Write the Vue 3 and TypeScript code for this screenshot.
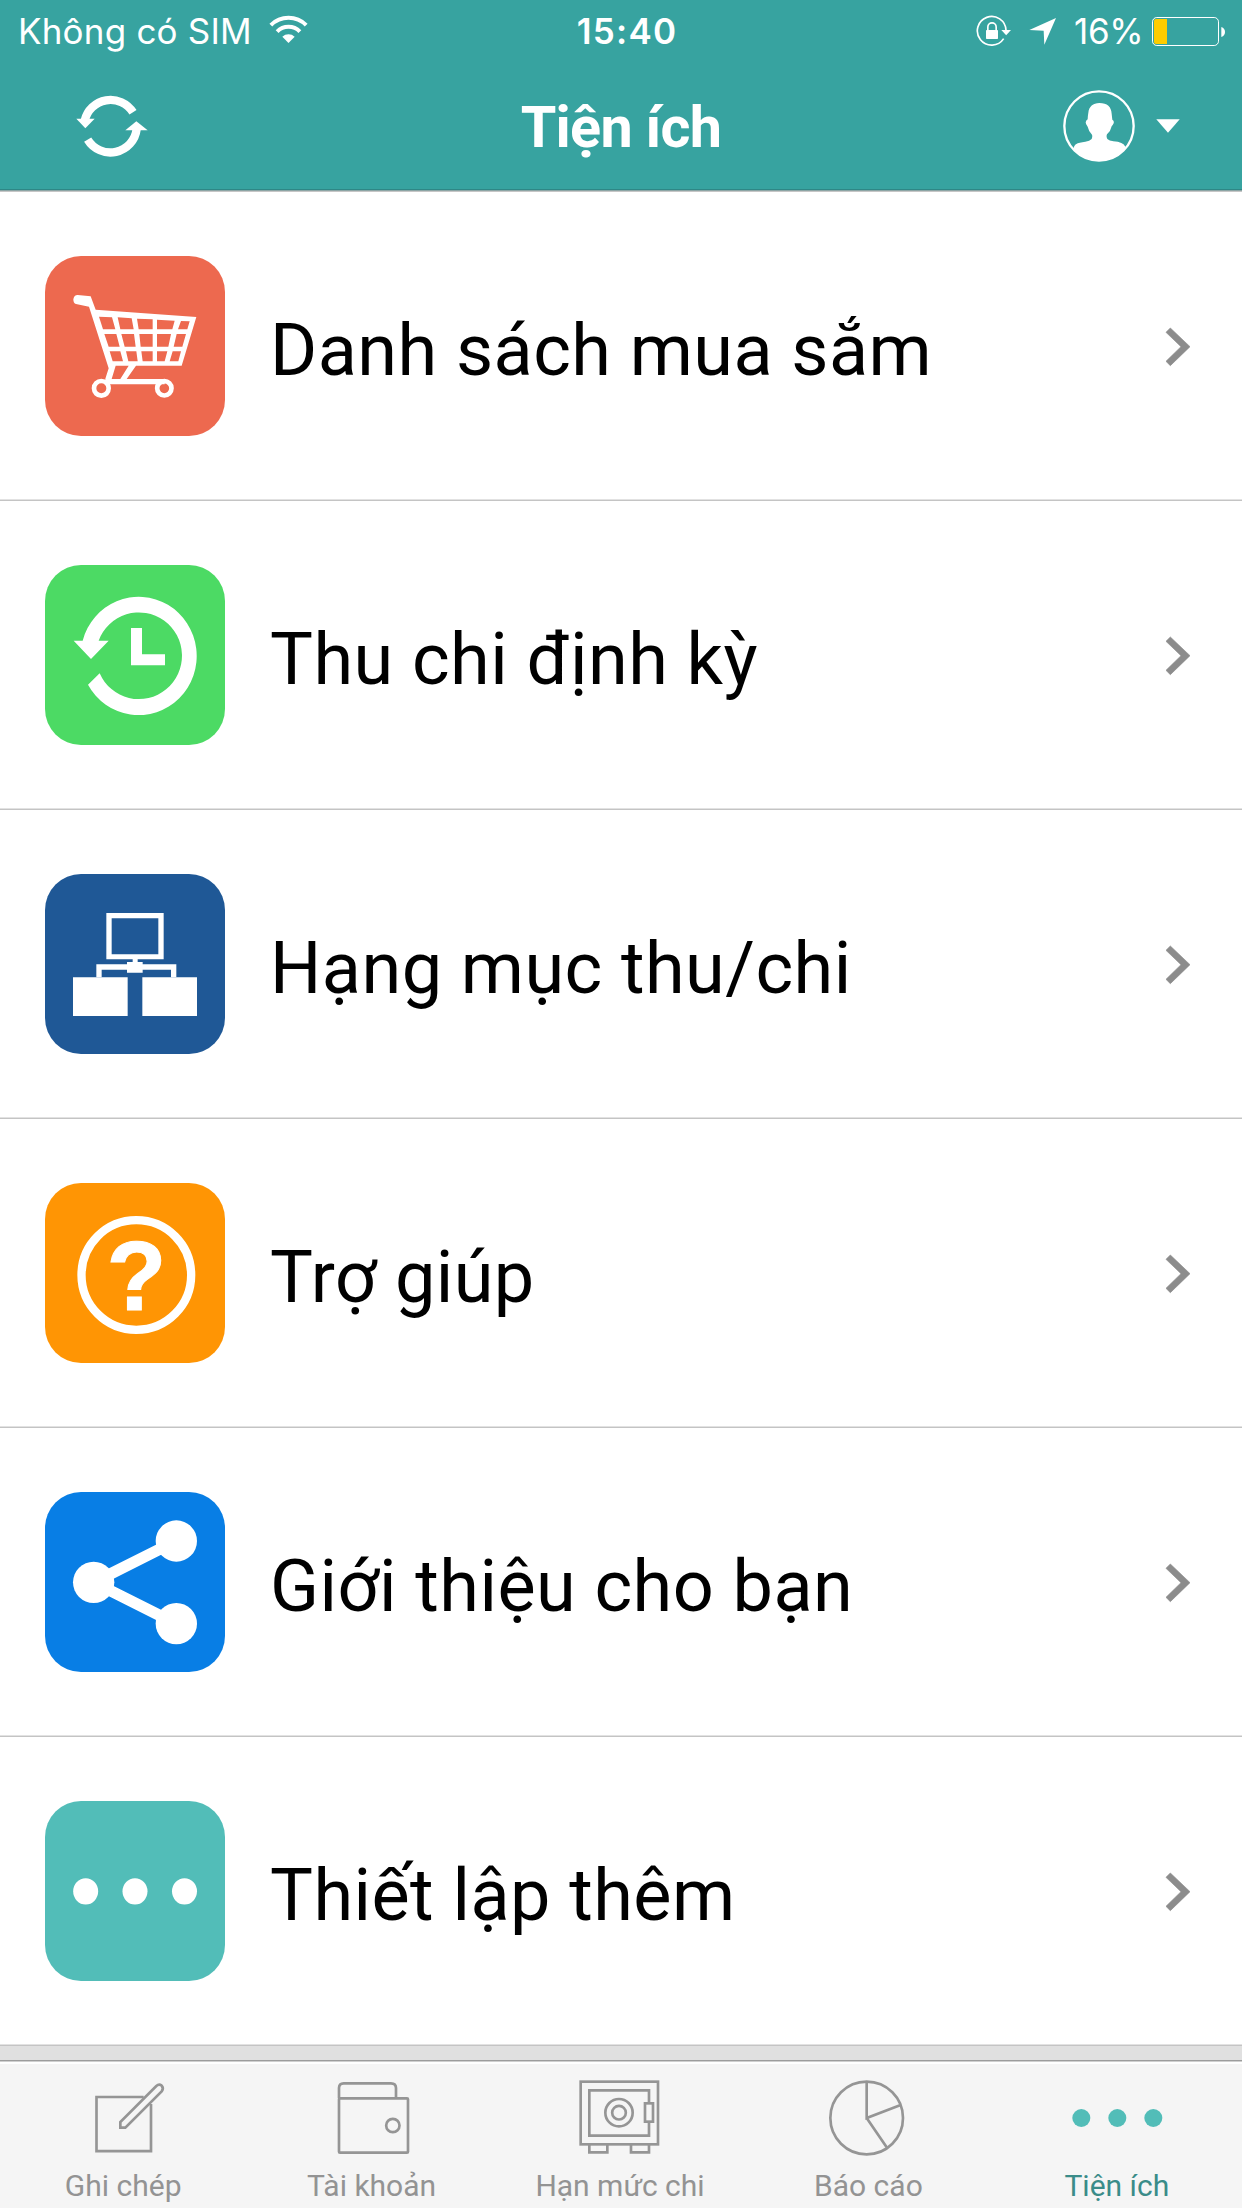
<script setup lang="ts">
type IconName = 'cart' | 'history' | 'category' | 'help' | 'share' | 'more'
type TabIcon = 'note' | 'wallet' | 'safe' | 'chart' | 'dots'

interface MenuItem {
  icon: IconName
  label: string
  box: string
}

interface Tab {
  icon: TabIcon
  label: string
  box: string
  active?: boolean
}

const items: MenuItem[] = [
  { icon: 'cart', label: 'Danh sách mua sắm', box: '45 48 540 540' },
  { icon: 'history', label: 'Thu chi định kỳ', box: '45 45 540 540' },
  { icon: 'category', label: 'Hạng mục thu/chi', box: '45 42 540 540' },
  { icon: 'help', label: 'Trợ giúp', box: '45 39 540 540' },
  { icon: 'share', label: 'Giới thiệu cho bạn', box: '45 36 540 540' },
  { icon: 'more', label: 'Thiết lập thêm', box: '45 63 540 540' },
]

const tabs: Tab[] = [
  { icon: 'note', label: 'Ghi chép', box: '223 117 300 300' },
  { icon: 'wallet', label: 'Tài khoản', box: '968 117 300 300' },
  { icon: 'safe', label: 'Hạn mức chi', box: '393 117 300 300' },
  { icon: 'chart', label: 'Báo cáo', box: '1138 117 300 300' },
  { icon: 'dots', label: 'Tiện ích', box: '383 687 300 300', active: true },
]
</script>

<template>
  <div class="screen">
    <header class="header">
      <div class="status">
        <div class="status-left">
          <span class="carrier">Không có SIM</span>
          <svg class="wifi" viewBox="807 45 117 87">
            <g fill="none" stroke="#fff" stroke-width="12">
              <path d="M812.5 75.500A75 75 0 0 1 918.500 75.500" />
              <path d="M831.400 94.800A48 48 0 0 1 899.600 94.800" />
            </g>
            <path d="M865.500 129L847 110A27 27 0 0 1 884 110Z" fill="#fff" />
          </svg>
        </div>
        <span class="time">15:40</span>
        <div class="status-right">
          <svg class="lock" viewBox="108 42 108 96">
            <path d="M191 113A43 43 0 1 1 198 88" fill="none" stroke="#fff" stroke-width="5" />
            <path d="M184 87H213L198.500 103Z" fill="#fff" />
            <rect x="138" y="87" width="36" height="27" rx="2" fill="#fff" />
            <path d="M143.500 88V78A12.500 12.500 0 0 1 168.500 78V88" fill="none" stroke="#fff" stroke-width="5" />
          </svg>
          <svg class="location" viewBox="267 51 84 84">
            <path d="M268 90L348 54L313 134L311 92Z" fill="#fff" />
          </svg>
          <span class="percent">16%</span>
          <svg class="battery" viewBox="636 45 222 93">
            <rect x="637.500" y="49.500" width="198" height="84" rx="13" fill="none" stroke="#fff" stroke-width="3" />
            <path d="M681 54V129H648Q642 129 642 123V60Q642 54 648 54Z" fill="#ffcc00" />
            <path d="M844 78Q855 82 855 93Q855 104 844 108Z" fill="#fff" />
          </svg>
        </div>
      </div>
      <div class="nav">
        <svg class="refresh" viewBox="228 282 216 189">
          <g fill="none" stroke="#fff" stroke-width="25">
            <path d="M399 334A79.500 79.500 0 0 0 254 359" />
            <path d="M263 416A79.500 79.500 0 0 0 410 384" />
          </g>
          <path d="M229 353H284L256 382Z" fill="#fff" />
          <path d="M376 388H443L409 361Z" fill="#fff" />
        </svg>
        <h1 class="title">Tiện ích</h1>
        <div class="account">
          <svg class="avatar" viewBox="369 270 216 216">
            <circle cx="477" cy="378" r="104" fill="none" stroke="#fff" stroke-width="7" />
            <path
              d="M478 309C502 309 514 321 515 341Q516 351 517 359Q523 362 521 370Q518 376 515 379Q512 394 501 403Q498 410 502 417Q508 423 520 424Q550 426 556 440L557 446A104 104 0 0 1 400 446L403 438Q407 428 436 425Q449 424 455 417Q458 410 456 404Q446 394 443 380Q437 374 437 367Q438 361 443 358Q443 350 445 338C447 320 459 309 478 309Z"
              fill="#fff"
            />
          </svg>
          <svg class="caret" viewBox="648 359 72 43"><path d="M648 360H720L684 401Z" fill="#fff" /></svg>
        </div>
      </div>
    </header>

    <main class="list">
      <div v-for="item in items" :key="item.icon" class="row">
        <svg class="tile" :class="item.icon" :viewBox="item.box">
          <g v-if="item.icon === 'cart'">
            <path
              fill-rule="evenodd"
              d="M143 165L182 169L197 209L499 231L455 377L318 377L290 417H404V433H226V416L236 385L177 200L138 192Q130 190 130 178Q132 165 143 165Z
              M257 377L245 417H271L296 377Z
              M207 230L246 232L256 268H219Z M263 232L305 235L311 268H271Z M321 236L368 238V268H326Z M381 239L434 242L427 268H381Z M453 243L479 244L472 268H444Z
              M223 282H259L269 320H236Z M274 282H312L317 320H284Z M328 282H368V320H332Z M381 282H423L415 320H381Z M440 282H468L457 320H431Z
              M239 334H271L279 364H248Z M288 334H319L323 364H295Z M334 334H368V364H338Z M381 334H412L404 364H381Z M428 334H453L445 364H419Z"
            />
            <circle class="wheel" cx="214" cy="445" r="22" />
            <circle class="wheel" cx="403" cy="445" r="21.500" />
          </g>
          <g v-else-if="item.icon === 'history'">
            <path d="M158 272A174 177.500 0 1 1 174 404L209 370A129 130 0 1 0 206 272H236L183 327L131 272Z" />
            <path d="M303 234H336V313H405V346H303Z" />
          </g>
          <g v-else-if="item.icon === 'category'">
            <path fill-rule="evenodd" d="M229 159H401V298H229ZM245 175V283H385V175Z" />
            <path d="M308 297H323V306H338V313H439V352H423V329H338V338H291V329H215V352H199V313H291V306H308Z" />
            <path d="M129 352H293V468H129ZM337 352H501V468H337Z" />
          </g>
          <g v-else-if="item.icon === 'help'">
            <circle cx="319" cy="315" r="164.500" class="ring" />
            <text x="319" y="420" class="question">?</text>
          </g>
          <g v-else-if="item.icon === 'share'">
            <path d="M438 183L191 307L438 431" class="link" />
            <circle cx="191" cy="307" r="62" />
            <circle cx="439" cy="183" r="62" />
            <circle cx="439" cy="431" r="62" />
          </g>
          <g v-else>
            <ellipse cx="167" cy="334" rx="37.500" ry="39.500" />
            <ellipse cx="315" cy="334" rx="37.500" ry="39.500" />
            <ellipse cx="463.500" cy="334" rx="37.500" ry="39.500" />
          </g>
        </svg>
        <span class="label">{{ item.label }}</span>
        <svg class="chevron" viewBox="677 100 72 114">
          <path d="M690 100L749 156L690 213L677 200L722 156L677 113Z" fill="#8c8c8c" stroke="#8c8c8c" stroke-width="2" />
        </svg>
      </div>
    </main>

    <div class="spacer"></div>

    <nav class="tabs">
      <div v-for="tab in tabs" :key="tab.icon" class="tab" :class="{ active: tab.active }">
        <svg class="tab-icon" :viewBox="tab.box">
          <g v-if="tab.icon === 'note'">
            <path d="M432 201H290.500V363.500H454V222" />
            <path d="M362 293V276L470 168Q478 161 486 167Q493 175 486 184L377 293Z" />
          </g>
          <g v-else-if="tab.icon === 'wallet'">
            <path d="M1016 205V174Q1016 160 1030 160H1172Q1187 160 1187 174V205" />
            <rect x="1016" y="205" width="207" height="163" rx="3" />
            <circle cx="1177.500" cy="286.500" r="20" />
          </g>
          <g v-else-if="tab.icon === 'safe'">
            <rect x="422" y="155" width="232" height="188" />
            <path d="M627 219V181H448V317H627V276" />
            <rect x="615" y="220" width="24" height="55" />
            <circle cx="537" cy="248" r="41" />
            <circle cx="537" cy="248" r="20.500" />
            <path d="M448 343V367H502V343M573 343V367H627V343" />
          </g>
          <g v-else-if="tab.icon === 'chart'">
            <circle cx="1281" cy="264" r="109" />
            <path d="M1281 155V264L1381 226M1281 264L1341 352" />
          </g>
          <g v-else class="dots">
            <circle cx="423" cy="834" r="27" />
            <circle cx="531" cy="834" r="27" />
            <circle cx="639" cy="834" r="27" />
          </g>
        </svg>
        <span class="tab-label">{{ tab.label }}</span>
      </div>
    </nav>
  </div>
</template>

<style>
body {
  margin: 0;
}
</style>

<style scoped>
.screen {
  display: flex;
  flex-direction: column;
  width: 1242px;
  height: 2208px;
  overflow: hidden;
  background: #fff;
  font-family: Roboto, 'Noto Sans', sans-serif;
}
svg {
  display: block;
  flex: none;
}
.header {
  box-sizing: border-box;
  height: 192px;
  color: #fff;
  background: linear-gradient(#37a3a0 189px, #2e8786 189px 190px, #8ba5a5 190px 191px, #c6c6c6 191px);
}
.status {
  display: grid;
  grid-template-columns: 1fr auto 1fr;
  align-items: center;
  height: 62px;
  font-family: Inter, 'Liberation Sans', sans-serif;
  font-size: 35px;
  line-height: 62px;
}
.status-left,
.status-right {
  display: flex;
  align-items: center;
}
.status-left {
  padding-left: 18px;
}
.carrier {
  width: 251px;
  letter-spacing: 0.2px;
  white-space: nowrap;
}
.wifi {
  width: 39px;
  height: 29px;
  margin-bottom: 3px;
}
.time {
  margin-left: 12px;
  font-weight: 600;
  letter-spacing: 1.2px;
}
.status-right {
  justify-content: flex-end;
  padding-right: 16px;
}
.lock {
  width: 36px;
  height: 32px;
}
.location {
  width: 28px;
  height: 28px;
  margin-left: 17px;
}
.percent {
  width: 78px;
  margin-left: 17px;
  letter-spacing: -0.3px;
  white-space: nowrap;
}
.battery {
  width: 74px;
  height: 31px;
}
.nav {
  display: grid;
  grid-template-columns: 1fr auto 1fr;
  align-items: center;
  height: 128px;
}
.refresh {
  width: 72px;
  height: 63px;
  margin-left: 76px;
}
.title {
  margin: 4px 0 0;
  font-size: 57.500px;
  font-weight: 700;
  letter-spacing: -0.7px;
  line-height: 68px;
}
.account {
  display: flex;
  align-items: center;
  justify-content: flex-end;
  padding-right: 62px;
}
.avatar {
  width: 72px;
  height: 72px;
}
.caret {
  width: 24px;
  height: 14px;
  margin-left: 21px;
}
.row {
  box-sizing: border-box;
  display: flex;
  align-items: center;
  height: 309px;
  padding: 0 52px 1px 45px;
  background: linear-gradient(#fff 307px, #e2e2e2 307px 308px, #c4c4c4 308px);
}
.tile {
  width: 180px;
  height: 180px;
  border-radius: 36px;
  fill: #fff;
}
.tile.cart { background: #ed694f; }
.tile.history { background: #4cda64; }
.tile.category { background: #1f5896; }
.tile.help { background: #ff9504; }
.tile.share { background: #087ee5; }
.tile.more { background: #52bdb8; }
.wheel {
  fill: none;
  stroke: #fff;
  stroke-width: 14;
}
.ring {
  fill: none;
  stroke: #fff;
  stroke-width: 25;
}
.link {
  fill: none;
  stroke: #fff;
  stroke-width: 34;
}
.question {
  font-family: 'Liberation Sans', sans-serif;
  font-size: 294px;
  font-weight: 700;
  text-anchor: middle;
  stroke: #fff;
  stroke-width: 3;
}
.label {
  flex: 1;
  margin-left: 45px;
  padding-top: 9px;
  color: #000;
  font-size: 72px;
  letter-spacing: 0.45px;
  line-height: 90px;
  white-space: nowrap;
}
.chevron {
  width: 24px;
  height: 38px;
  margin-top: 2px;
  overflow: visible;
}
.spacer {
  height: 14px;
  background: #e0e0e0;
}
.tabs {
  display: flex;
  height: 148px;
  background: linear-gradient(#9c9c9c 1px, #cfcfcf 1px 2px, #fff 2px 4px, #f5f5f5 4px);
}
.tab {
  display: flex;
  flex: 1;
  flex-direction: column;
  align-items: center;
  color: #939393;
}
.tab-icon {
  width: 100px;
  height: 100px;
  margin-top: 9px;
  fill: none;
  stroke: #959595;
  stroke-width: 8;
}
.dots {
  fill: #52bdb8;
  stroke: none;
}
.tab-label {
  margin-top: -1px;
  margin-right: 2px;
  font-size: 30px;
  line-height: 36px;
  white-space: nowrap;
}
.active {
  color: #3a8c89;
}
</style>
